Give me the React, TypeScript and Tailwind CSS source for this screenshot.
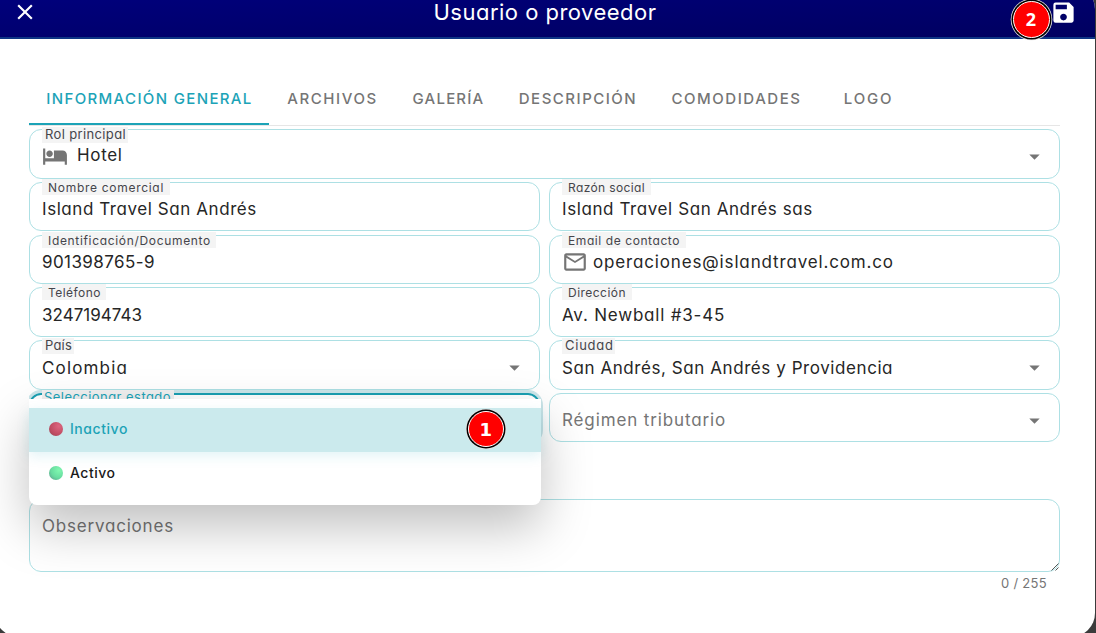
import React from 'react';
import clsx from 'clsx';
import { MdArrowDropDown, MdClose, MdHotel, MdMailOutline, MdSave } from 'react-icons/md';

// Tabs of the user / provider dialog
const tabs = [
  { name: 'INFORMACIÓN GENERAL', className: 'w-[240px] tracking-[1.35px]', active: true },
  { name: 'ARCHIVOS', className: 'w-[126px] tracking-[1.6px]' },
  { name: 'GALERÍA', className: 'w-[106px] tracking-[1.2px]' },
  { name: 'DESCRIPCIÓN', className: 'w-[153px] tracking-[1.5px]' },
  { name: 'COMODIDADES', className: 'w-[164px] tracking-[1.55px]' },
  { name: 'LOGO', className: 'w-[100px] tracking-[1.75px]' },
];

type FieldProps = {
  label?: string;
  labelClass?: string;
  value: string;
  valueClass?: string;
  className?: string;
  icon?: React.ReactNode;
  select?: boolean;
};

const Field = ({ label, labelClass, value, valueClass, className, icon, select }: FieldProps) => (
  <div
    className={clsx(
      'relative flex items-center rounded-[12px] border border-[#ade0e4] pl-3 pr-[12.5px]',
      className
    )}
  >
    {label && (
      <span
        className={clsx(
          'absolute left-3 flex h-4 items-center whitespace-nowrap bg-[#f4f4f4] text-[#45454b]',
          select ? '-top-[3px] pl-[3px] text-[13px]' : '-top-1 pl-[6px] pt-[2px] text-[12px]',
          labelClass
        )}
      >
        {label}
      </span>
    )}
    {icon}
    <span className={clsx('flex-1 whitespace-nowrap text-[17px] leading-6', valueClass)}>{value}</span>
    {select && <MdArrowDropDown className="mt-[5px] h-[25px] w-[25px] text-[#757575]" />}
  </div>
);

const Step = ({ value, className }: { value: string; className: string }) => (
  <div
    className={clsx(
      'absolute flex items-center justify-center rounded-full border border-white bg-[#ff0000] text-[18px] font-bold text-white shadow-[0_0_0_1.5px_#000,0_0_0_2.3px_#e5e5e5]',
      className
    )}
  >
    {value}
  </div>
);

const options = [
  { name: 'Inactivo', selected: true, dot: 'bg-[radial-gradient(circle_at_70%_30%,#dd6680,#c04c62_60%,#8f4450)]' },
  { name: 'Activo', selected: false, dot: 'bg-[radial-gradient(circle_at_70%_30%,#80f8b0,#68dca0_55%,#5a9488)]' },
];

const StateMenu = () => (
  <div className="absolute left-0 top-[6px] z-10 h-[106px] w-[512px] rounded-b-[8px] bg-white pt-[9px] shadow-[0_22px_50px_rgba(0,0,0,0.25)]">
    {options.map((option) => (
      <div
        key={option.name}
        className={clsx(
          'relative flex h-11 items-center pb-[2px] pl-5 text-[14px] font-medium',
          option.selected
            ? 'bg-[#cbeaed] text-[#1ca3b7] tracking-[0.55px] shadow-[0_4px_12px_rgba(26,163,183,0.13)]'
            : 'text-[#1a1a1a] tracking-[0.5px]'
        )}
      >
        <span className={clsx('mr-[7px] h-[14px] w-[14px] rounded-full', option.dot)}></span>
        <span className="-mt-px leading-4">{option.name}</span>
        {option.selected && (
          <Step value="1" className='left-[439px] top-[3px] h-9 w-9 font-["DejaVu_Sans"]' />
        )}
      </div>
    ))}
  </div>
);

const App = () => {
  return (
    <div className="h-[633px] w-[1096px] overflow-hidden bg-[#3b3b3b] font-[Inter,sans-serif] text-[#262626] [font-feature-settings:'cv11']">
      <div className="-ml-[5px] -mt-[15px] h-[652px] w-[1100px] overflow-hidden rounded-[24px] bg-white">
        <header className="relative grid h-[54px] grid-cols-3 items-start border-b-2 border-[#0d3585] bg-linear-to-br from-[#000080] to-[#000060] pl-[17px] pr-[18px] pt-[14px] text-white">
          <MdClose className="h-[26px] w-[26px]" />
          <h1 className="whitespace-nowrap pl-px text-center text-[22px] leading-[26px] tracking-[0.48px]">
            Usuario o proveedor
          </h1>
          <MdSave className="h-[27px] w-[27px] justify-self-end" />
          <Step value="2" className='left-[1017.5px] top-[15.5px] h-[37px] w-[37px] font-["Open_Sans"]' />
        </header>

        <main className="ml-[34px] mt-[34px] w-[1031px]">
          <nav className="flex h-[53px] border-b border-[#e6e6e6]">
            {tabs.map((tab) => (
              <div
                key={tab.name}
                className={clsx(
                  'flex h-[52px] items-center justify-center whitespace-nowrap border-b-2 pl-px pt-[2px] text-[15px] font-medium',
                  tab.active ? 'border-[#1ca3b7] text-[#1ca3b7]' : 'border-transparent text-[#757575]',
                  tab.className
                )}
              >
                {tab.name}
              </div>
            ))}
          </nav>

          <div className="mt-[3px] grid grid-cols-[511px_511px] grid-rows-[53px_53px_52px_53px_53px_49px] items-start gap-x-[9px]">
            <Field
              label="Rol principal"
              labelClass="w-[86px] pb-px tracking-[0.36px]"
              value="Hotel"
              valueClass="pt-[2px] tracking-[0.65px]"
              className="col-span-2 h-[50px]"
              icon={<MdHotel className="mr-[9px] mt-1 h-[26px] w-[26px] text-[#757575]" />}
              select
            />
            <Field
              label="Nombre comercial"
              labelClass="w-[128px] tracking-[0.71px]"
              value="Island Travel San Andrés"
              valueClass="pt-1 tracking-[0.57px]"
              className="h-[49px]"
            />
            <Field
              label="Razón social"
              labelClass="w-[89px] tracking-[0.37px]"
              value="Island Travel San Andrés sas"
              valueClass="pt-1 tracking-[0.59px]"
              className="h-[49px]"
            />
            <Field
              label="Identificación/Documento"
              labelClass="w-[174px] tracking-[0.67px]"
              value="901398765-9"
              valueClass="pt-1 tracking-[0.42px]"
              className="h-[49px]"
            />
            <Field
              label="Email de contacto"
              labelClass="w-[124px] tracking-[0.58px]"
              value="operaciones@islandtravel.com.co"
              valueClass="pt-1 tracking-[0.85px]"
              className="h-[49px]"
              icon={<MdMailOutline className="mr-[5px] mt-1 h-[26px] w-[26px] text-[#757575]" />}
            />
            <Field
              label="Teléfono"
              labelClass="w-[64px] tracking-[0.46px]"
              value="3247194743"
              valueClass="pt-[6px] tracking-[0.02px]"
              className="h-[50px]"
            />
            <Field
              label="Dirección"
              labelClass="w-[70px] tracking-[0.47px]"
              value="Av. Newball #3-45"
              valueClass="pt-[6px] tracking-[0.79px]"
              className="h-[50px]"
            />
            <Field
              label="País"
              labelClass="w-[32px] tracking-[0.2px]"
              value="Colombia"
              valueClass="pt-[6px] tracking-[1.16px]"
              className="h-[50px]"
              select
            />
            <Field
              label="Ciudad"
              labelClass="w-[53px] tracking-[0.75px]"
              value="San Andrés, San Andrés y Providencia"
              valueClass="pt-[6px] tracking-[0.57px]"
              className="h-[50px]"
              select
            />
            <div className="relative h-[49px]">
              <div className="h-[49px] rounded-[12px] border-2 border-[#1a9fb2] shadow-[0_0_0_3px_#cbe6ea] [clip-path:inset(-3px_-3px_-3px_0)]"></div>
              <span className="absolute -top-[3px] left-[13px] flex h-4 w-[132px] items-center whitespace-nowrap bg-[#f0f0f0] pl-[2px] text-[13px] tracking-[0.45px] text-[#1ca3b7]">
                Seleccionar estado
              </span>
              <StateMenu />
            </div>
            <Field
              value="Régimen tributario"
              valueClass="pt-1 tracking-[0.87px] text-[#757575]"
              className="h-[49px]"
              select
            />
          </div>

          <div className="relative mt-[57px] h-[73px] rounded-[12px] border border-[#ade0e4] px-3 pt-[14px] text-[17px] leading-6 tracking-[0.8px] text-[#757575]">
            Observaciones
            <svg className="absolute bottom-0 right-0" width="8" height="8" viewBox="0 0 8 8" stroke="#444" strokeWidth="0.9">
              <path d="M0.5 7.5 7.5 0.5M4.5 7.5 7.5 4.5" />
            </svg>
          </div>
          <p className="pr-[13px] pt-[2px] text-right text-[13px] leading-[18px] tracking-[0.3px] text-[#757575]">
            0 / 255
          </p>
        </main>
      </div>
    </div>
  );
};

export default App;
